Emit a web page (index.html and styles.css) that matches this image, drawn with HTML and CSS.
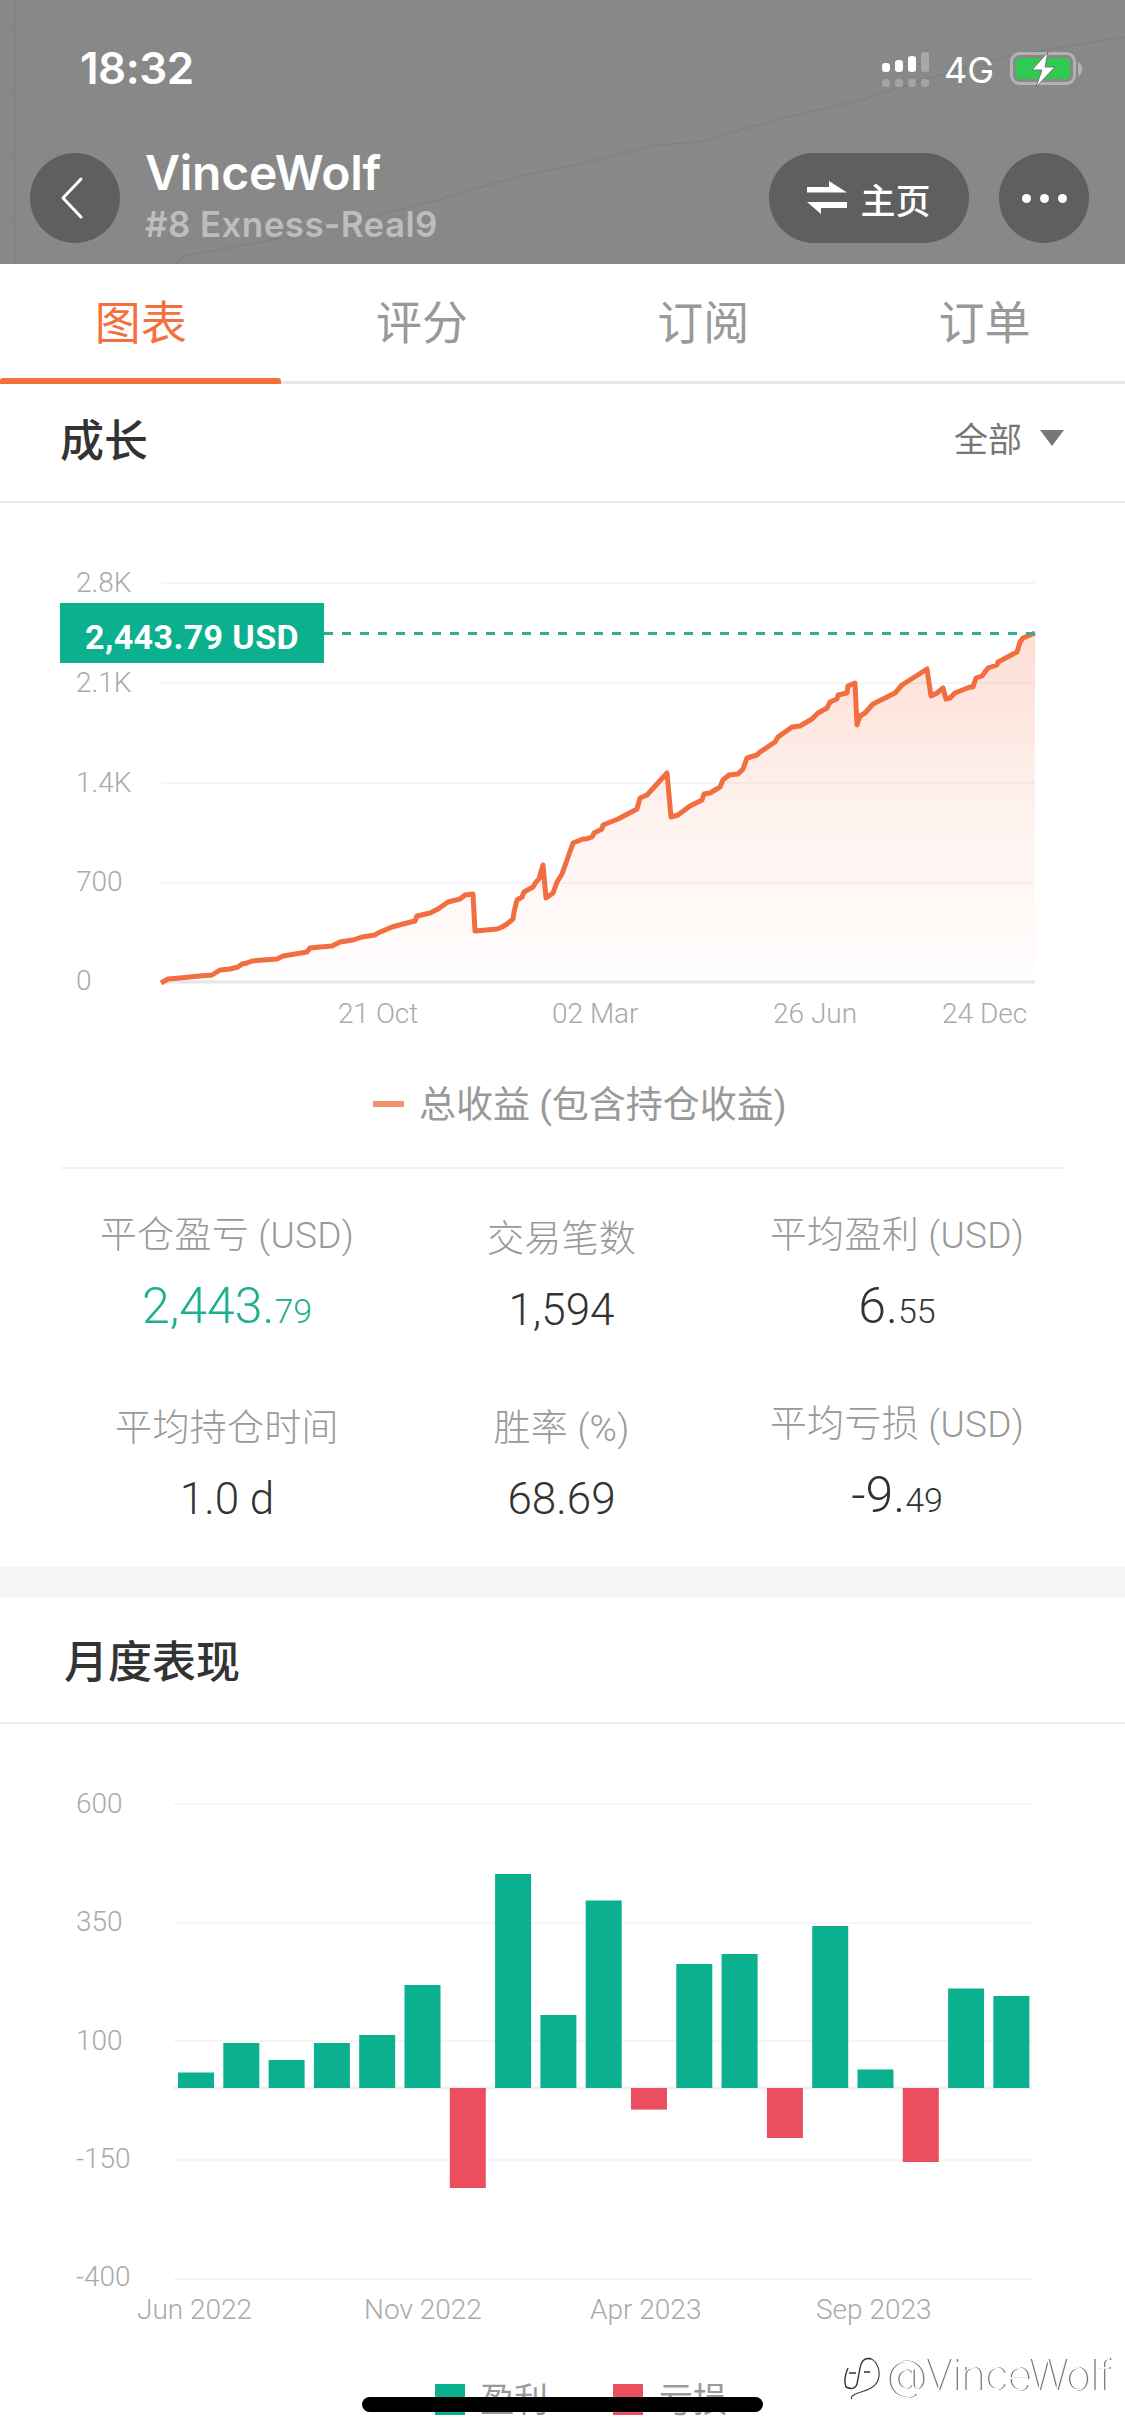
FILE: index.html
```html
<!DOCTYPE html>
<html lang="zh-CN">
<head>
<meta charset="utf-8">
<title>VinceWolf</title>
<link rel="stylesheet" href="styles.css">
</head>
<body>
<div class="page">
  <header class="top">
    <svg class="top-bg" viewBox="0 0 1125 264" width="1125" height="264" aria-hidden="true">
      <path class="top-edge" d="M15 0 V264 M5 26 H15 M5 91 H15 M5 157 H15 M5 222 H15"/>
      <polyline class="top-trace" points="176,263 185,256 287,237 438,200 495,183 534,173 588,162 656,145 699,142 775,120 861,100 933,77 1004,57 1125,37"/>
    </svg>
    <div class="status">
      <span class="clock">18:32</span>
      <div class="status-right">
        <svg class="signal" viewBox="0 0 48 36" width="48" height="36" aria-hidden="true">
          <rect x="0" y="11" width="8" height="9" rx="3" fill="#fff"/>
          <rect x="13" y="8" width="8" height="12" rx="3" fill="#fff"/>
          <rect x="26" y="4" width="8" height="16" rx="3" fill="#fff"/>
          <rect x="39" y="0" width="8" height="20" rx="3" fill="#a8a8a8"/>
          <rect x="0" y="27" width="8" height="8" rx="3" fill="#a4a4a4"/>
          <rect x="13" y="27" width="8" height="8" rx="3" fill="#a4a4a4"/>
          <rect x="26" y="27" width="8" height="8" rx="3" fill="#a4a4a4"/>
          <rect x="39" y="27" width="8" height="8" rx="3" fill="#a4a4a4"/>
        </svg>
        <span class="net">4G</span>
        <svg class="battery" viewBox="0 0 74 37" width="74" height="37" aria-hidden="true">
          <rect x="3.5" y="2.5" width="63" height="30" rx="8" fill="none" stroke="#b2b2b2" stroke-width="3"/>
          <rect x="8" y="7" width="54" height="21" rx="4" fill="#2ecb50"/>
          <path d="M70 11c3 1 4 4 4 7s-1 6-4 7z" fill="#b2b2b2"/>
          <path d="M40 1 L24 19 L34 19 L28 36 L47 16 L37 16 Z" fill="#fff" stroke="#777" stroke-width="1"/>
        </svg>
      </div>
    </div>
    <div class="nav">
      <button class="round-btn" aria-label="返回">
        <svg viewBox="0 0 24 44" width="24" height="44" aria-hidden="true"><path d="M21 3 L3 22 L21 41" fill="none" stroke="#fff" stroke-width="3" stroke-linecap="round" stroke-linejoin="round"/></svg>
      </button>
      <div class="who">
        <div class="name">VinceWolf</div>
        <div class="sub">#8 Exness-Real9</div>
      </div>
      <button class="pill-btn">
        <svg viewBox="0 0 40 34" width="40" height="34" aria-hidden="true">
          <path d="M0 6 H22 V0 L40 11.5 H0 Z" fill="#fff"/>
          <path d="M40 21 V27 H14 V33 L0 21 Z" fill="#fff"/>
        </svg>
        <span>主页</span>
      </button>
      <button class="round-btn more" aria-label="更多"><i></i><i></i><i></i></button>
    </div>
  </header>

  <nav class="tabs">
    <a class="tab active">图表</a>
    <a class="tab">评分</a>
    <a class="tab">订阅</a>
    <a class="tab">订单</a>
  </nav>

  <section class="sec-head growth-head">
    <h2>成长</h2>
    <div class="filter">全部<i class="caret"></i></div>
  </section>

  <svg class="chart growth" viewBox="0 503 1125 664" width="1125" height="664">
    <defs>
      <linearGradient id="area" x1="0" y1="633" x2="0" y2="982" gradientUnits="userSpaceOnUse">
        <stop offset="0" stop-color="#f4693a" stop-opacity=".22"/>
        <stop offset=".5" stop-color="#f4693a" stop-opacity=".09"/>
        <stop offset="1" stop-color="#f4693a" stop-opacity=".01"/>
      </linearGradient>
    </defs>
    <g class="grid">
      <line x1="161" x2="1035" y1="583" y2="583"/>
      <line x1="161" x2="1035" y1="683" y2="683"/>
      <line x1="161" x2="1035" y1="783" y2="783"/>
      <line x1="161" x2="1035" y1="883" y2="883"/>
    </g>
    <line class="axis" x1="161" x2="1035" y1="982" y2="982"/>
    <polygon fill="url(#area)" points="161,982 161,983 168,979 180,978 200,976 212,975 220,970 230,969 238,967 242,964 247,963 252,961 263,960 277,959 283,956 307,952 310,948 320,947 332,946 340,942 353,940 362,937 375,935 378,933 392,927 403,924 415,921 417,916 430,913 438,909 448,902 460,899 465,895 473,894 475,931 497,929 502,927 507,924 513,919 514,912 517,900 522,897 524,892 533,887 536,882 539,879 543,865 546,898 553,893 557,882 562,874 567,860 573,843 583,839 586,839 592,837 594,833 602,829 603,825 618,819 637,809 640,798 647,795 667,773 671,817 678,815 690,806 702,800 704,794 710,793 720,787 723,780 729,775 738,774 743,769 747,758 757,755 760,752 775,742 778,737 792,727 800,726 812,719 818,713 827,708 830,702 837,699 838,695 847,693 848,686 855,683 857,725 860,716 865,713 873,704 895,693 902,685 927,669 931,696 937,693 943,688 946,699 950,698 955,693 970,687 973,687 976,678 982,676 988,668 997,665 998,662 1017,652 1020,642 1023,638 1035,633 1035,982"/>
    <polyline class="equity" points="161,983 168,979 180,978 200,976 212,975 220,970 230,969 238,967 242,964 247,963 252,961 263,960 277,959 283,956 307,952 310,948 320,947 332,946 340,942 353,940 362,937 375,935 378,933 392,927 403,924 415,921 417,916 430,913 438,909 448,902 460,899 465,895 473,894 475,931 497,929 502,927 507,924 513,919 514,912 517,900 522,897 524,892 533,887 536,882 539,879 543,865 546,898 553,893 557,882 562,874 567,860 573,843 583,839 586,839 592,837 594,833 602,829 603,825 618,819 637,809 640,798 647,795 667,773 671,817 678,815 690,806 702,800 704,794 710,793 720,787 723,780 729,775 738,774 743,769 747,758 757,755 760,752 775,742 778,737 792,727 800,726 812,719 818,713 827,708 830,702 837,699 838,695 847,693 848,686 855,683 857,725 860,716 865,713 873,704 895,693 902,685 927,669 931,696 937,693 943,688 946,699 950,698 955,693 970,687 973,687 976,678 982,676 988,668 997,665 998,662 1017,652 1020,642 1023,638 1035,633"/>
    <line class="dash" x1="324" x2="1035" y1="633.5" y2="633.5"/>
    <g class="tick">
      <text x="76" y="592">2.8K</text>
      <text x="76" y="692">2.1K</text>
      <text x="76" y="792">1.4K</text>
      <text x="76" y="891">700</text>
      <text x="76" y="990">0</text>
      <text x="338" y="1023">21 Oct</text>
      <text x="552" y="1023">02 Mar</text>
      <text x="773" y="1023">26 Jun</text>
      <text x="942" y="1023">24 Dec</text>
    </g>
    <rect class="badge" x="60" y="603" width="264" height="60"/>
    <text class="badge-text" x="85" y="649">2,443.79 USD</text>
    <rect class="legend-dash" x="373" y="1101" width="31" height="6"/>
    <text class="legend-text wide" x="419" y="1118">总收益 (包含持仓收益)</text>
  </svg>

  <div class="stat-wrap">
    <div class="stats">
      <div class="stat">
        <div class="label">平仓盈亏 (USD)</div>
        <div class="value big green">2,443.<small>79</small></div>
      </div>
      <div class="stat low">
        <div class="label">交易笔数</div>
        <div class="value">1,594</div>
      </div>
      <div class="stat">
        <div class="label">平均盈利 (USD)</div>
        <div class="value big">6.<small>55</small></div>
      </div>
      <div class="stat low">
        <div class="label">平均持仓时间</div>
        <div class="value">1.0 d</div>
      </div>
      <div class="stat low">
        <div class="label">胜率 (%)</div>
        <div class="value">68.69</div>
      </div>
      <div class="stat">
        <div class="label">平均亏损 (USD)</div>
        <div class="value big">-9.<small>49</small></div>
      </div>
    </div>
  </div>

  <div class="band"></div>

  <section class="sec-head month">
    <h2>月度表现</h2>
  </section>

  <svg class="chart monthly" viewBox="0 1724 1125 712" width="1125" height="712">
    <g class="grid">
      <line x1="174" x2="1033" y1="1804" y2="1804"/>
      <line x1="174" x2="1033" y1="1923" y2="1923"/>
      <line x1="174" x2="1033" y1="2041" y2="2041"/>
      <line x1="174" x2="1033" y1="2160" y2="2160"/>
      <line x1="174" x2="1033" y1="2279" y2="2279"/>
    </g>
    <line class="axis zero" x1="174" x2="1033" y1="2088" y2="2088"/>
    <g class="bars up">
      <rect x="178" y="2072.5" width="36" height="15.5"/>
      <rect x="223.3" y="2043" width="36" height="45"/>
      <rect x="268.6" y="2060" width="36" height="28"/>
      <rect x="313.9" y="2043" width="36" height="45"/>
      <rect x="359.2" y="2035" width="36" height="53"/>
      <rect x="404.5" y="1985" width="36" height="103"/>
      <rect x="495.1" y="1874" width="36" height="214"/>
      <rect x="540.4" y="2015" width="36" height="73"/>
      <rect x="585.7" y="1900.5" width="36" height="187.5"/>
      <rect x="676.3" y="1964" width="36" height="124"/>
      <rect x="721.6" y="1954" width="36" height="134"/>
      <rect x="812.2" y="1926" width="36" height="162"/>
      <rect x="857.5" y="2069.5" width="36" height="18.5"/>
      <rect x="948.1" y="1988.5" width="36" height="99.5"/>
      <rect x="993.4" y="1996" width="36" height="92"/>
    </g>
    <g class="bars down">
      <rect x="449.8" y="2088" width="36" height="100"/>
      <rect x="631" y="2088" width="36" height="21.6"/>
      <rect x="766.9" y="2088" width="36" height="50"/>
      <rect x="902.8" y="2088" width="36" height="74"/>
    </g>
    <g class="tick">
      <text x="76" y="1813">600</text>
      <text x="76" y="1931">350</text>
      <text x="76" y="2050">100</text>
      <text x="76" y="2168">-150</text>
      <text x="76" y="2286">-400</text>
      <text x="137" y="2319">Jun 2022</text>
      <text x="364" y="2319">Nov 2022</text>
      <text x="590" y="2319">Apr 2023</text>
      <text x="816" y="2319">Sep 2023</text>
    </g>
    <rect class="up-fill" x="435" y="2384" width="30" height="31"/>
    <text class="legend-text" x="480" y="2412">盈利</text>
    <rect class="down-fill" x="613" y="2384" width="30" height="31"/>
    <text class="legend-text" x="659" y="2412">亏损</text>
  </svg>

  <div class="home-bar"></div>
  <div class="watermark">
    <svg viewBox="0 0 38 44" width="38" height="44" aria-hidden="true">
      <path d="M26 2 C31 3 37 10 36 20 C35 31 25 34 15 37 C10 39 7 41 9 43" fill="none" stroke="#444" stroke-width="1.2"/>
      <path d="M28 3 C21 1 18 6 17 12 L14 28 C13 32 9 34 3 31 C1 26 2 19 5 12 M6 17 H13 M21 16 H27" fill="none" stroke="#333" stroke-width="1.4"/>
    </svg>
    <span>@VinceWolf</span>
  </div>
</div>
</body>
</html>
```

FILE: styles.css
```css
* { box-sizing: border-box; }
html, body { margin: 0; padding: 0; background: #fff; }
body { font-family: Roboto, "Noto Sans CJK SC", sans-serif; }
.page { position: relative; width: 1125px; height: 2436px; overflow: hidden; background: #fff; }

/* dimmed header */
.top { position: relative; height: 264px; background: #888; overflow: hidden; }
.top-bg { position: absolute; left: 0; top: 0; }
.top-edge { fill: none; stroke: #828282; stroke-width: 1.5; }
.top-trace { fill: none; stroke: #808080; stroke-width: 1.5; }
.status { position: relative; height: 153px; padding: 44px 43px 0 80px; display: flex; justify-content: space-between; align-items: flex-start; color: #fff; }
.clock { font-family: Inter, sans-serif; font-size: 44px; line-height: 48px; font-weight: 600; letter-spacing: -.5px; }
.status-right { display: flex; align-items: flex-start; padding-top: 8px; }
.signal { margin: 0 14px 0 0; }
.net { font-family: Inter, sans-serif; font-size: 36px; line-height: 36px; margin-right: 14px; }
.battery { margin-top: -1px; }
.nav { position: relative; display: flex; align-items: center; height: 90px; padding: 0 36px 0 30px; }
.round-btn { width: 90px; height: 90px; border: 0; padding: 0; border-radius: 50%; background: #5f5f5f; display: flex; align-items: center; justify-content: center; flex: none; }
.round-btn svg { margin-left: -7px; }
.who { margin-left: 25px; flex: 1; color: #fff; margin-top: -7px; }
.name { font-family: Inter, sans-serif; font-size: 48px; line-height: 56px; font-weight: 600; letter-spacing: -.2px; }
.sub { font-family: Inter, sans-serif; font-size: 35px; line-height: 42px; font-weight: 600; color: #bdbdbd; margin-top: 2px; letter-spacing: .4px; }
.pill-btn { width: 200px; height: 90px; border: 0; border-radius: 45px; background: #5f5f5f; color: #fff; display: flex; align-items: center; justify-content: center; gap: 13px; padding: 0; margin-right: 30px; font-family: "Noto Sans CJK SC", sans-serif; font-size: 35px; font-weight: 500; }
.more { gap: 9px; }
.more i { width: 9px; height: 9px; border-radius: 50%; background: #fff; display: block; }

/* tabs */
.tabs { display: grid; grid-template-columns: repeat(4, 1fr); height: 120px; border-bottom: 3px solid #e8e8e8; }
.tab { display: flex; align-items: center; justify-content: center; padding-bottom: 8px; font-family: "Noto Sans CJK SC", sans-serif; font-size: 46px; color: #999; position: relative; }
.tab.active { color: #f4703f; }
.tab.active::after { content: ""; position: absolute; left: 0; right: 0; bottom: -3px; height: 6px; border-radius: 3px 3px 0 0; background: #f4703f; }

/* section header */
.sec-head { height: 119px; display: flex; align-items: center; justify-content: space-between; padding: 0 61px 0 60px; border-bottom: 2px solid #ebebeb; }
.growth-head { padding-bottom: 10px; }
.sec-head h2 { margin: 0; font-family: "Noto Sans CJK SC", sans-serif; font-size: 44px; font-weight: 500; color: #333; }
.filter { display: flex; align-items: center; gap: 18px; font-family: "Noto Sans CJK SC", sans-serif; font-size: 34px; color: #777; }
.caret { width: 0; height: 0; border-left: 12px solid transparent; border-right: 12px solid transparent; border-top: 16px solid #777; }

/* charts */
.chart { display: block; }
.grid line { stroke: #f5f5f5; stroke-width: 2; }
.axis { stroke: #e6e6e6; stroke-width: 3; }
.zero { stroke: #eee; }
.tick text { font-family: Roboto, sans-serif; font-size: 28px; font-weight: 300; fill: #aaa; }
.equity { fill: none; stroke: #f26d3f; stroke-width: 5; stroke-linejoin: round; }
.dash { stroke: #2fae93; stroke-width: 3; stroke-dasharray: 9 9; }
.badge { fill: #0bb08f; }
.badge-text { font-family: Roboto, sans-serif; font-size: 34px; font-weight: 700; letter-spacing: .4px; fill: #fff; }
.legend-dash { fill: #f19272; }
.legend-text { font-family: Roboto, "Noto Sans CJK SC", sans-serif; font-size: 34px; fill: #999; }
.legend-text.wide { font-size: 37px; }
.bars.up rect, .up-fill { fill: #0bb08f; }
.bars.down rect, .down-fill { fill: #eb4e5f; }

/* stats */
.stat-wrap { padding: 0 60px; }
.stats { border-top: 2px solid #f2f2f2; display: grid; grid-template-columns: 334px 335px 336px; grid-template-rows: 189px 211px; padding-top: 42px; height: 400px; text-align: center; }
.stat.low { padding-top: 4px; }
.label { font-family: Roboto, "Noto Sans CJK SC", sans-serif; font-size: 37px; line-height: 50px; color: #999; font-weight: 300; letter-spacing: .3px; }
.value { font-size: 44px; line-height: 56px; font-weight: 300; color: #333; margin-top: 17px; }
.value.big { font-size: 50px; letter-spacing: 0; }
.value small { font-size: 34px; letter-spacing: 0; }
.green { color: #1daf8e; }
.band { height: 30px; background: #f5f5f5; }
.month { height: 127px; padding-left: 64px; padding-bottom: 2px; }

/* overlay bits */
.home-bar { position: absolute; left: 362px; top: 2397px; width: 401px; height: 15px; border-radius: 8px; background: #000; }
.watermark { position: absolute; left: 843px; top: 2356px; display: flex; align-items: flex-start; gap: 4px; }
.watermark span { font-family: Inter, sans-serif; font-weight: 200; font-size: 42px; line-height: 38px; letter-spacing: -.6px; color: #fff; text-shadow: 1px 0 0 #444; }
```
